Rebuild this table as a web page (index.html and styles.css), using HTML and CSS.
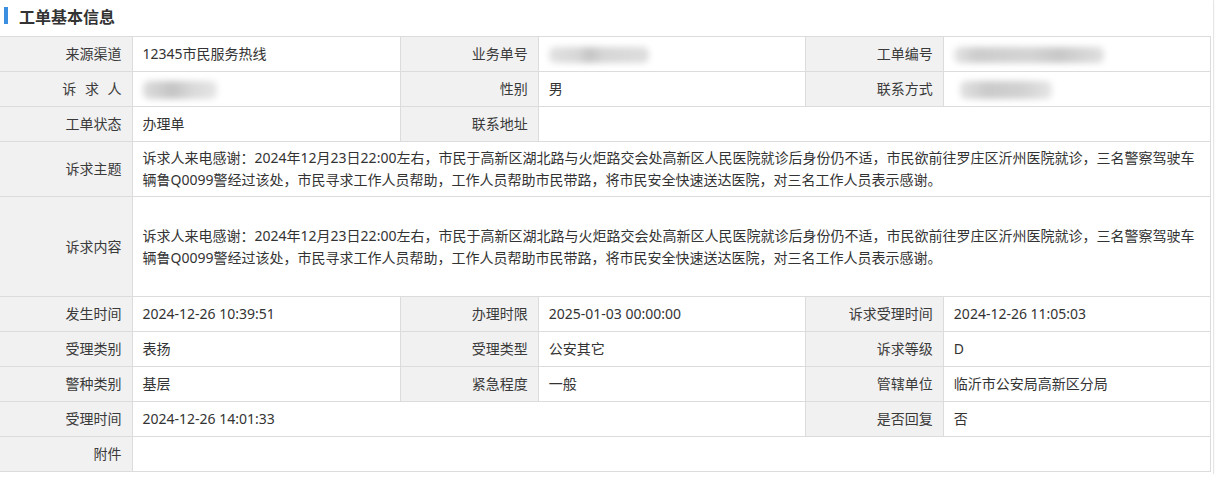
FILE: index.html
```html
<!DOCTYPE html>
<html lang="zh-CN">
<head>
<meta charset="UTF-8">
<meta name="viewport" content="width=device-width, initial-scale=1.0">
<title>工单基本信息</title>
<link rel="stylesheet" href="styles.css">
</head>
<body>
<div class="panel">
    <div class="panel-title"><span class="title-bar"></span>工单基本信息</div>
    <table class="info-table">
        <colgroup>
            <col class="col-label-1">
            <col class="col-value-1">
            <col class="col-label">
            <col class="col-value">
            <col class="col-label">
            <col class="col-value">
        </colgroup>
        <tr>
            <td class="label">来源渠道</td>
            <td>12345市民服务热线</td>
            <td class="label">业务单号</td>
            <td><span class="mask mask-order"></span></td>
            <td class="label">工单编号</td>
            <td><span class="mask mask-number"></span></td>
        </tr>
        <tr>
            <td class="label spaced">诉 求 人</td>
            <td><span class="mask mask-name"></span></td>
            <td class="label">性别</td>
            <td>男</td>
            <td class="label">联系方式</td>
            <td><span class="mask mask-phone"></span></td>
        </tr>
        <tr>
            <td class="label">工单状态</td>
            <td>办理单</td>
            <td class="label">联系地址</td>
            <td colspan="3"></td>
        </tr>
        <tr class="row-subject">
            <td class="label">诉求主题</td>
            <td colspan="5" class="long-text">诉求人来电感谢：2024年12月23日22:00左右，市民于高新区湖北路与火炬路交会处高新区人民医院就诊后身份仍不适，市民欲前往罗庄区沂州医院就诊，三名警察驾驶车辆鲁Q0099警经过该处，市民寻求工作人员帮助，工作人员帮助市民带路，将市民安全快速送达医院，对三名工作人员表示感谢。</td>
        </tr>
        <tr class="row-content">
            <td class="label">诉求内容</td>
            <td colspan="5" class="long-text">诉求人来电感谢：2024年12月23日22:00左右，市民于高新区湖北路与火炬路交会处高新区人民医院就诊后身份仍不适，市民欲前往罗庄区沂州医院就诊，三名警察驾驶车辆鲁Q0099警经过该处，市民寻求工作人员帮助，工作人员帮助市民带路，将市民安全快速送达医院，对三名工作人员表示感谢。</td>
        </tr>
        <tr>
            <td class="label">发生时间</td>
            <td>2024-12-26 10:39:51</td>
            <td class="label">办理时限</td>
            <td>2025-01-03 00:00:00</td>
            <td class="label">诉求受理时间</td>
            <td>2024-12-26 11:05:03</td>
        </tr>
        <tr>
            <td class="label">受理类别</td>
            <td>表扬</td>
            <td class="label">受理类型</td>
            <td>公安其它</td>
            <td class="label">诉求等级</td>
            <td>D</td>
        </tr>
        <tr>
            <td class="label">警种类别</td>
            <td>基层</td>
            <td class="label">紧急程度</td>
            <td>一般</td>
            <td class="label">管辖单位</td>
            <td>临沂市公安局高新区分局</td>
        </tr>
        <tr>
            <td class="label">受理时间</td>
            <td colspan="3">2024-12-26 14:01:33</td>
            <td class="label">是否回复</td>
            <td>否</td>
        </tr>
        <tr>
            <td class="label">附件</td>
            <td colspan="5"></td>
        </tr>
    </table>
</div>
</body>
</html>
```

FILE: styles.css
```css
body {
    margin: 0;
    background: #fff;
    font-family: "Noto Sans", "Noto Sans CJK SC", sans-serif;
    color: #333;
}

.panel {
    width: 1213px;
    border-right: 1px solid #e6e6e6;
    padding-bottom: 2px;
    box-shadow: 0 2px 2px rgba(0, 0, 0, 0.06);
}

.panel-title {
    display: flex;
    align-items: center;
    height: 31px;
    padding-top: 0;
    padding-bottom: 5px;
    font-size: 16px;
    font-weight: bold;
    color: #333;
}

.title-bar {
    width: 4px;
    height: 17px;
    margin: 0 11px 0 4px;
    background: #3b8fe0;
}

.info-table {
    width: 1211px;
    table-layout: fixed;
    border-collapse: collapse;
    font-size: 14px;
}

.col-label-1 { width: 132px; }
.col-value-1 { width: 268px; }
.col-label { width: 138px; }
.col-value { width: 267px; }

.info-table td {
    height: 34px;
    padding: 0 10px;
    border: 1px solid #dcdcdc;
    white-space: nowrap;
    line-height: 22px;
}

.info-table tr td:first-child {
    border-left: 0;
}

.info-table td.label {
    text-align: right;
    background: #f1f1f1;
    color: #3a3a3a;
}

.spaced {
    word-spacing: 5px;
}

.info-table td.long-text {
    white-space: normal;
}

.row-subject td {
    height: 54px;
}

.row-content td {
    height: 99px;
}

.mask {
    display: inline-block;
    vertical-align: middle;
    height: 16px;
    border-radius: 6px;
    background: #cfcfcf;
    filter: blur(3px);
}

.mask-order {
    width: 100px;
    background: linear-gradient(to right, #e2e2e2 0%, #d6d6d6 30%, #c4c4c4 40%, #d6d6d6 55%, #dedede 100%);
}

.mask-number {
    width: 150px;
    background: linear-gradient(to right, #e4e4e4 0%, #cccccc 15%, #d4d4d4 50%, #c8c8c8 70%, #e0e0e0 100%);
}

.mask-name {
    width: 74px;
    height: 18px;
    background: linear-gradient(to right, #dddddd 0%, #c4c4c4 40%, #d8d8d8 65%, #e6e6e6 100%);
}

.mask-phone {
    width: 92px;
    height: 18px;
    margin-left: 6px;
    background: linear-gradient(to right, #e2e2e2 0%, #cacaca 30%, #d2d2d2 70%, #e6e6e6 100%);
}
```
